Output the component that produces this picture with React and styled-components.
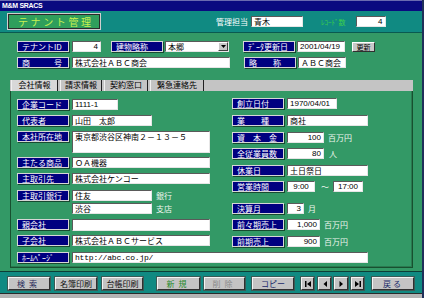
import React from 'react';
import styled, { createGlobalStyle } from 'styled-components';

const GlobalStyle = createGlobalStyle`
  html, body { margin: 0; padding: 0; background: #a8a8a8; }
  body { font-family: "Noto Sans CJK JP", "Liberation Sans", sans-serif; }
  * { box-sizing: border-box; }
`;

const Window = styled.div`
  width: 424px;
  height: 298px;
  overflow: hidden;
  display: flex;
  flex-direction: column;
  background: #339966;
  border-right: 2px solid #20305a;
`;

const TitleBar = styled.div`
  height: 11px;
  background: #0a0a80;
  border-top: 1px solid #6a6ab0;
  color: #fff;
  font-family: "Liberation Sans", sans-serif;
  font-weight: bold;
  font-size: 7px;
  line-height: 9px;
  letter-spacing: -0.3px;
  padding-left: 2px;
`;

const Header = styled.div`
  height: 22px;
  background: #108a82;
  border-bottom: 1px solid #0a5a50;
  display: flex;
  align-items: center;
  padding-left: 7px;
`;

const TitleBox = styled.div`
  width: 94px;
  height: 17px;
  border: 1px solid #cfcfcf;
  box-shadow: inset 1px 1px 0 #2a2a2a, inset -1px -1px 0 #2a2a2a;
  background: #2f9e5c;
  color: #c8f050;
  font-size: 10px;
  line-height: 15px;
  letter-spacing: 2.6px;
  padding-left: 10px;
  white-space: nowrap;
`;

const HeaderText = styled.span`
  margin-left: ${p => p.$ml}px;
  color: ${p => p.$color || '#fff'};
  font-size: ${p => p.$size || 8}px;
  white-space: nowrap;
`;

const Main = styled.div`
  flex: 1;
  display: flex;
  flex-direction: column;
`;

const TopForm = styled.div`
  display: flex;
  flex-direction: column;
  gap: 5px;
  padding: 8px 0 0 17px;
`;

const Row = styled.div`
  display: flex;
  align-items: ${p => (p.$top ? 'flex-start' : 'center')};
  margin-top: ${p => p.$mt || 0}px;
  height: ${p => p.$h || 11}px;
`;

const Label = styled.div`
  flex: none;
  width: ${p => p.$w || 52}px;
  height: 11px;
  background: #000080;
  color: #fff;
  border: 1px solid #d6d6d6;
  box-shadow: 1px 1px 0 #174a30;
  font-size: 8px;
  line-height: 9px;
  padding-left: 4px;
  white-space: nowrap;
  overflow: hidden;
  margin-right: ${p => p.$mr ?? 3}px;
`;

const Field = styled.div`
  flex: none;
  position: relative;
  width: ${p => p.$w}px;
  height: ${p => p.$h || 11}px;
  margin-left: ${p => p.$ml || 0}px;
  background: #fff;
  border: 1px solid;
  border-color: #5a5a5a #e6e6e6 #e6e6e6 #5a5a5a;
  color: #000;
  font-size: 8px;
  line-height: 9px;
  padding: 0 2px;
  text-align: ${p => p.$align || 'left'};
  white-space: nowrap;
  overflow: hidden;
  font-family: ${p =>
    p.$mono
      ? '"Liberation Mono", monospace'
      : p.$num
      ? '"Liberation Sans", sans-serif'
      : '"Noto Sans CJK JP", sans-serif'};
  letter-spacing: ${p => (p.$mono ? '-0.2px' : '0')};
`;

const DropArrow = styled.span`
  position: absolute;
  right: 0;
  top: 0;
  width: 10px;
  height: 9px;
  background: #c8c8c8;
  border: 1px solid;
  border-color: #fff #404040 #404040 #fff;
  display: flex;
  align-items: center;
  justify-content: center;
`;

const Unit = styled.span`
  margin-left: ${p => p.$ml || 4}px;
  color: #eef6ee;
  font-size: 8px;
  white-space: nowrap;
`;

const SmallButton = styled.div`
  width: 23px;
  height: 10px;
  margin-left: 7px;
  background: #c8c8c8;
  border: 1px solid;
  border-color: #fff #303030 #303030 #fff;
  color: #000;
  font-size: 7px;
  line-height: 8px;
  text-align: center;
`;

const Tabs = styled.div`
  display: flex;
  margin: 12px 0 0 10px;
  width: 403px;
  height: 11px;
  background: #c4c4c4;
  padding-left: 1px;
`;

const Tab = styled.div`
  width: ${p => p.$w}px;
  height: 11px;
  margin-right: 2px;
  background: ${p => (p.$active ? '#d8d8d8' : '#c4c4c4')};
  border-left: 1px solid #f0f0f0;
  border-right: 1px solid #202020;
  color: #000;
  font-size: 8px;
  line-height: 10px;
  text-align: center;
  white-space: nowrap;
`;

const Panel = styled.div`
  margin-left: 10px;
  width: 403px;
  height: 177px;
  border: 1px solid #17502f;
  border-top: none;
  box-shadow: inset -1px -1px 0 #2a7a50;
  padding-left: 6px;
  display: flex;
  flex-direction: column;
`;

const Columns = styled.div`
  display: flex;
`;

const Column = styled.div`
  display: flex;
  flex-direction: column;
  width: ${p => p.$w}px;
  margin-left: ${p => p.$ml || 0}px;
`;

const BottomBar = styled.div`
  height: 22px;
  margin-top: 3px;
  background: #108a82;
  border-top: 1px solid #0c3e36;
  display: flex;
  align-items: flex-start;
  padding: 5px 0 0 8px;
`;

const Button = styled.div`
  flex: none;
  width: ${p => p.$w || 42}px;
  height: 13px;
  margin-left: ${p => p.$ml || 0}px;
  background: #c4c4c4;
  border: 1px solid;
  border-color: #f4f4f4 #303030 #303030 #f4f4f4;
  box-shadow: 0 0 0 1px #3a5a55;
  color: ${p => p.$color || '#101010'};
  font-size: 8px;
  line-height: 11px;
  text-align: center;
  letter-spacing: ${p => p.$ls || 0}px;
  white-space: nowrap;
  display: flex;
  align-items: center;
  justify-content: center;
`;

const Footer = styled.div`
  height: 5px;
  border-top: 1px solid #2a2a2a;
  background: #b4b4b4;
`;

const NavIcon = ({ kind }) => {
  const tri = {
    first: 'M7 1 L3 4 L7 7 Z',
    prev: 'M6 1 L2.5 4 L6 7 Z',
    next: 'M2.5 1 L6 4 L2.5 7 Z',
    last: 'M1 1 L5 4 L1 7 Z',
  }[kind];
  return (
    <svg width="8" height="8" viewBox="0 0 8 8">
      <path d={tri} fill="#000" />
      {kind === 'first' && <rect x="1" y="1" width="1.5" height="6" fill="#000" />}
      {kind === 'last' && <rect x="5.5" y="1" width="1.5" height="6" fill="#000" />}
    </svg>
  );
};

export default function App() {
  return (
    <Window>
      <GlobalStyle />
      <TitleBar>M&amp;M SRACS</TitleBar>
      <Header>
        <TitleBox>テナント管理</TitleBox>
        <HeaderText $ml={115}>管理担当</HeaderText>
        <Field $w={52} $ml={3}>青木</Field>
        <HeaderText $ml={18} $color="#3ed04a" $size={7}>ﾚｺｰﾄﾞ数</HeaderText>
        <Field $w={30} $ml={10} $align="right" $num>4</Field>
      </Header>

      <Main>
        <TopForm>
          <Row>
            <Label>テナントID</Label>
            <Field $w={29} $align="right" $num>4</Field>
            <Label style={{ marginLeft: 10 }} $mr={2}>建物略称</Label>
            <Field $w={64}>
              本郷
              <DropArrow>
                <svg width="5" height="3" viewBox="0 0 5 3"><path d="M0 0 H5 L2.5 3 Z" fill="#000" /></svg>
              </DropArrow>
            </Field>
            <Label style={{ marginLeft: 14 }} $mr={2}>ﾃﾞｰﾀ更新日</Label>
            <Field $w={48} $num>2001/04/19</Field>
            <SmallButton>更新</SmallButton>
          </Row>
          <Row>
            <Label>商　　　号</Label>
            <Field $w={158}>株式会社ＡＢＣ商会</Field>
            <Label style={{ marginLeft: 14 }} $mr={2}>略　　称</Label>
            <Field $w={48}>ＡＢＣ商会</Field>
          </Row>
        </TopForm>

        <Tabs>
          <Tab $w={47} $active>会社情報</Tab>
          <Tab $w={42}>請求情報</Tab>
          <Tab $w={44}>契約窓口</Tab>
          <Tab $w={54}>緊急連絡先</Tab>
        </Tabs>

        <Panel>
          <Columns>
            <Column $w={193}>
              <Row $mt={8}>
                <Label>企業コード</Label>
                <Field $w={46} $num>1111-1</Field>
              </Row>
              <Row $mt={5}>
                <Label>代表者</Label>
                <Field $w={80}>山田　太郎</Field>
              </Row>
              <Row $mt={5} $h={22} $top>
                <Label>本社所在地</Label>
                <Field $w={138} $h={22}>東京都渋谷区神南２－１３－５</Field>
              </Row>
              <Row $mt={4}>
                <Label>主たる商品</Label>
                <Field $w={138}>ＯＡ機器</Field>
              </Row>
              <Row $mt={5}>
                <Label>主取引先</Label>
                <Field $w={138}>株式会社ケンコー</Field>
              </Row>
              <Row $mt={6}>
                <Label>主取引銀行</Label>
                <Field $w={80}>住友</Field>
                <Unit>銀行</Unit>
              </Row>
              <Row $mt={2}>
                <Field $w={80} $ml={55}>渋谷</Field>
                <Unit>支店</Unit>
              </Row>
              <Row $mt={5}>
                <Label>親会社</Label>
                <Field $w={138} $h={12}></Field>
              </Row>
              <Row $mt={5}>
                <Label>子会社</Label>
                <Field $w={138}>株式会社ＡＢＣサービス</Field>
              </Row>
            </Column>

            <Column $w={150} $ml={22}>
              <Row $mt={7}>
                <Label>創立日付</Label>
                <Field $w={50} $num>1970/04/01</Field>
              </Row>
              <Row $mt={6}>
                <Label>業　　種</Label>
                <Field $w={81}>商社</Field>
              </Row>
              <Row $mt={6}>
                <Label>資　本　金</Label>
                <Field $w={37} $align="right" $num>100</Field>
                <Unit>百万円</Unit>
              </Row>
              <Row $mt={5}>
                <Label>全従業員数</Label>
                <Field $w={37} $align="right" $num>80</Field>
                <Unit $ml={5}>人</Unit>
              </Row>
              <Row $mt={6}>
                <Label>休業日</Label>
                <Field $w={81}>土日祭日</Field>
              </Row>
              <Row $mt={5}>
                <Label>営業時間</Label>
                <Field $w={28} $align="center" $num>9:00</Field>
                <Unit $ml={6}>～</Unit>
                <Field $w={30} $ml={4} $align="center" $num>17:00</Field>
              </Row>
              <Row $mt={11}>
                <Label>決算月</Label>
                <Field $w={17} $align="right" $num>3</Field>
                <Unit>月</Unit>
              </Row>
              <Row $mt={5}>
                <Label>前々期売上</Label>
                <Field $w={33} $align="right" $num>1,000</Field>
                <Unit>百万円</Unit>
              </Row>
              <Row $mt={6}>
                <Label>前期売上</Label>
                <Field $w={33} $align="right" $num>900</Field>
                <Unit>百万円</Unit>
              </Row>
            </Column>
          </Columns>
          <Row $mt={5}>
            <Label>ﾎｰﾑﾍﾟｰｼﾞ</Label>
            <Field $w={296} $mono>http://abc.co.jp/</Field>
          </Row>
        </Panel>
      </Main>

      <BottomBar>
        <Button $color="#2a2a5a" $ls={4}>検索</Button>
        <Button $ml={5}>名簿印刷</Button>
        <Button $w={41} $ml={5}>台帳印刷</Button>
        <Button $w={43} $ml={14} $color="#1f8a2a" $ls={4}>新規</Button>
        <Button $w={41} $ml={4} $color="#8a8a8a" $ls={4}>削除</Button>
        <Button $ml={7} $color="#1a2a6a">コピー</Button>
        <Button $w={13} $ml={7}><NavIcon kind="first" /></Button>
        <Button $w={13} $ml={4}><NavIcon kind="prev" /></Button>
        <Button $w={14} $ml={3}><NavIcon kind="next" /></Button>
        <Button $w={13} $ml={3}><NavIcon kind="last" /></Button>
        <Button $ml={8} $color="#1a2a6a" $ls={2}>戻る</Button>
      </BottomBar>
      <Footer />
    </Window>
  );
}
